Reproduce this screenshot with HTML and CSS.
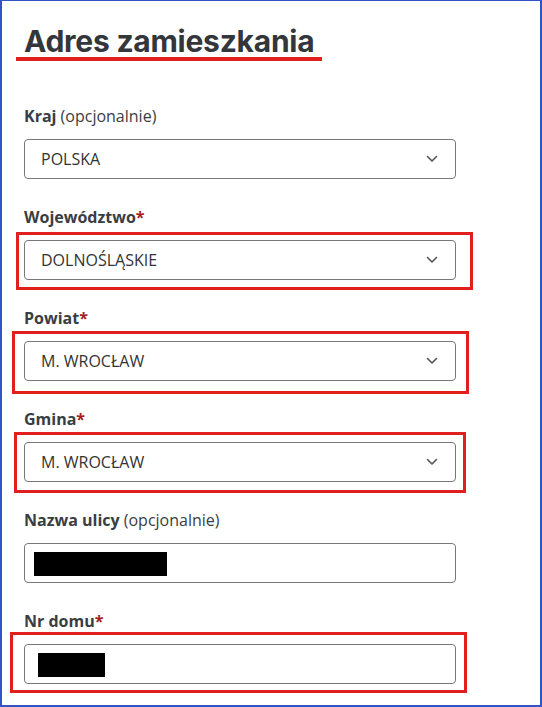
FILE: index.html
```html
<!DOCTYPE html>
<html lang="pl">
<head>
  <meta charset="UTF-8">
  <title>Adres zamieszkania</title>
  <link rel="stylesheet" href="styles.css">
</head>
<body>
  <div class="page">
    <h2 class="section-title">Adres zamieszkania</h2>

    <form class="address-form">
      <div class="field">
        <label class="field-label"><b>Kraj</b> (opcjonalnie)</label>
        <div class="control select-box">
          <span>POLSKA</span>
          <svg class="chevron" width="12" height="8" viewBox="0 0 12 8"><path d="M1.5 1.5 L6 6 L10.5 1.5" /></svg>
        </div>
      </div>

      <div class="field">
        <label class="field-label"><b>Województwo</b><span class="req">*</span></label>
        <div class="control select-box">
          <span>DOLNOŚLĄSKIE</span>
          <svg class="chevron" width="12" height="8" viewBox="0 0 12 8"><path d="M1.5 1.5 L6 6 L10.5 1.5" /></svg>
          <span class="mark mark--woj"></span>
        </div>
      </div>

      <div class="field">
        <label class="field-label"><b>Powiat</b><span class="req">*</span></label>
        <div class="control select-box">
          <span>M. WROCŁAW</span>
          <svg class="chevron" width="12" height="8" viewBox="0 0 12 8"><path d="M1.5 1.5 L6 6 L10.5 1.5" /></svg>
          <span class="mark mark--powiat"></span>
        </div>
      </div>

      <div class="field">
        <label class="field-label"><b>Gmina</b><span class="req">*</span></label>
        <div class="control select-box">
          <span>M. WROCŁAW</span>
          <svg class="chevron" width="12" height="8" viewBox="0 0 12 8"><path d="M1.5 1.5 L6 6 L10.5 1.5" /></svg>
          <span class="mark mark--gmina"></span>
        </div>
      </div>

      <div class="field">
        <label class="field-label"><b>Nazwa ulicy</b> (opcjonalnie)</label>
        <div class="control text-box">
          <span class="redacted redacted--street"></span>
        </div>
      </div>

      <div class="field">
        <label class="field-label"><b>Nr domu</b><span class="req">*</span></label>
        <div class="control text-box">
          <span class="redacted redacted--house"></span>
          <span class="mark mark--house"></span>
        </div>
      </div>
    </form>
  </div>
</body>
</html>
```

FILE: styles.css
```css
html, body {
  margin: 0;
  padding: 0;
  background: #fff;
}

.page {
  box-sizing: border-box;
  width: 542px;
  height: 707px;
  border: 1px solid #3253c6;
  border-width: 1px 2px 2px 2px;
  padding: 24px 0 0 22px;
  font-family: "Open Sans", "Noto Sans", sans-serif;
  color: #3a3d42;
  overflow: hidden;
}

/* heading with red underline */
.section-title {
  display: inline-block;
  margin: 0 0 44px -8px;
  padding: 0 8px;
  font-family: Inter, "Open Sans", sans-serif;
  font-weight: 700;
  font-size: 30px;
  line-height: 32px;
  letter-spacing: -0.25px;
  color: #33363b;
  border-bottom: 4px solid #e0201f;
}

.address-form {
  display: flex;
  flex-direction: column;
}

.field {
  display: flex;
  flex-direction: column;
  margin-bottom: 27px;
}

.field-label {
  font-size: 16px;
  line-height: 22px;
  margin-bottom: 12px;
}

.field-label b {
  font-weight: 700;
}

.req {
  color: #a61c1c;
  font-weight: 700;
}

.control {
  position: relative;
  box-sizing: border-box;
  width: 432px;
  height: 40px;
  border: 1px solid #777;
  border-radius: 4px;
  background: #fff;
}

.select-box {
  display: flex;
  align-items: center;
  justify-content: space-between;
  padding: 0 17px 0 16px;
  font-size: 16px;
  color: #333;
}

.chevron {
  fill: none;
  stroke: #555;
  stroke-width: 1.6;
  stroke-linecap: round;
  stroke-linejoin: round;
}

.redacted {
  position: absolute;
  top: 8px;
  height: 24px;
  background: #000;
}

.redacted--street {
  left: 9px;
  width: 133px;
}

.redacted--house {
  left: 13px;
  width: 67px;
}

/* red annotation frames drawn over the fields */
.mark {
  position: absolute;
  border: 3px solid #e0201f;
  pointer-events: none;
}

.mark--woj {
  left: -9px;
  right: -18px;
  top: -9px;
  bottom: -11px;
}

.mark--powiat {
  left: -13px;
  right: -14px;
  top: -11px;
  bottom: -14px;
}

.mark--gmina {
  left: -11px;
  right: -11px;
  top: -11px;
  bottom: -12px;
}

.mark--house {
  left: -15px;
  right: -12px;
  top: -13px;
  bottom: -10px;
}
```
